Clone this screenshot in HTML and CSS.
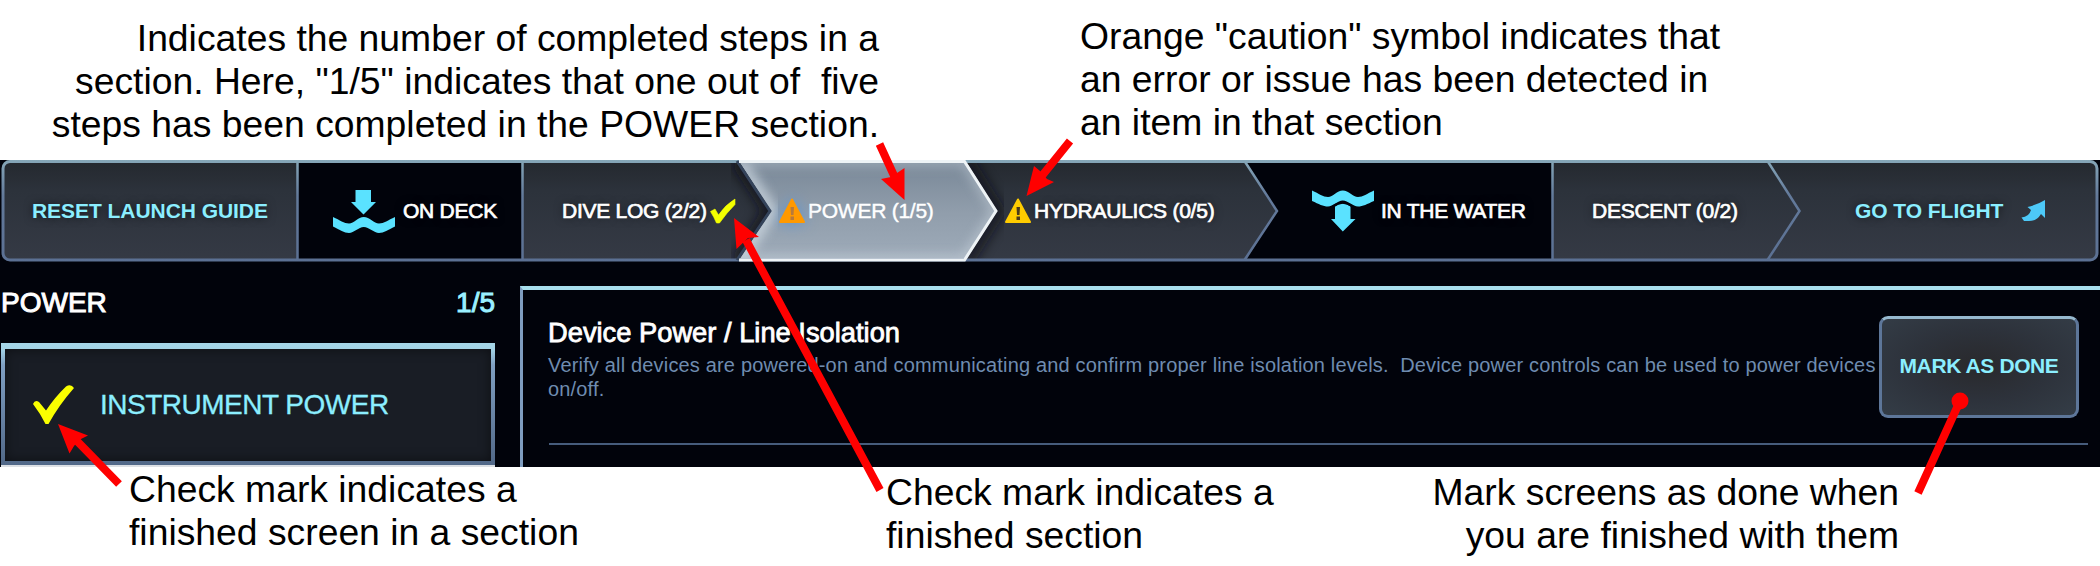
FILE: index.html
```html
<!DOCTYPE html>
<html lang="en">
<head>
<meta charset="utf-8">
<title>Launch guide</title>
<link rel="stylesheet" href="styles.css">
</head>
<body>
<div class="page">
  <div class="notes notes-top">
    <p class="note note-steps">Indicates the number of completed steps in a
section. Here, "1/5" indicates that one out of  five
steps has been completed in the POWER section.</p>
    <p class="note note-caution">Orange "caution" symbol indicates that
an error or issue has been detected in
an item in that section</p>
  </div>

  <div class="app">
    <nav class="steps">
      <svg class="steps-bg" width="2100" height="102" viewBox="0 0 2100 102">
        <defs>
          <linearGradient id="slate" x1="0" y1="0" x2="0" y2="1"><stop offset="0" stop-color="#24282e"/><stop offset=".3" stop-color="#2c323b"/><stop offset="1" stop-color="#353a45"/></linearGradient>
          <linearGradient id="active" x1="0" y1="0" x2="0" y2="1"><stop offset="0" stop-color="#788797"/><stop offset=".5" stop-color="#909dab"/><stop offset="1" stop-color="#9facba"/></linearGradient>
          <linearGradient id="edge" gradientUnits="userSpaceOnUse" x1="0" y1="0" x2="0" y2="102"><stop offset="0" stop-color="#86a7b8"/><stop offset=".35" stop-color="#637a9b"/><stop offset="1" stop-color="#5b7093"/></linearGradient>
          <filter id="soft" x="-20%" y="-20%" width="140%" height="140%"><feGaussianBlur stdDeviation="6"/></filter>
          <clipPath id="bar"><rect x="2" y="0" width="2095" height="101" rx="8"/></clipPath>
          <clipPath id="activeClip"><path d="M738 0H965L997 51 965 101H738L771 51Z"/></clipPath>
          <clipPath id="hydClip"><path d="M965 0H1246L1278 51 1246 101H965L997 51Z"/></clipPath>
          <clipPath id="diveClip"><path d="M523 0H738L771 51 738 101H523Z"/></clipPath>
        </defs>
        <g clip-path="url(#bar)">
          <rect width="2100" height="102" fill="url(#slate)"/>
          <path d="M298 0H523V102H298ZM1245 0H1552V102H1245L1277 51Z" fill="#01030b"/>
          <path d="M738 0H965L997 51 965 102H738L771 51Z" fill="url(#active)"/>
          <g clip-path="url(#activeClip)">
            <path d="M738 0L771 51 738 102" fill="none" stroke="#dce6ee" stroke-width="12" opacity=".7" filter="url(#soft)"/>
            <path d="M745 100H965L997 51 965 1H745" fill="none" stroke="#dbe4ec" stroke-width="8" opacity=".5" filter="url(#soft)"/>
          </g>
          <g clip-path="url(#hydClip)">
            <path d="M965 0L997 51 965 102" fill="none" stroke="#0c0f14" stroke-width="16" opacity=".65" filter="url(#soft)"/>
          </g>
          <g clip-path="url(#diveClip)">
            <path d="M738 0L771 51 738 102" fill="none" stroke="#0c0f14" stroke-width="16" opacity=".7" filter="url(#soft)"/>
          </g>
        </g>
        <g fill="none" stroke="url(#edge)" stroke-width="3">
          <path d="M297.500 2V99M522.500 2V99M1552.500 2V99" stroke-width="2.500"/>
          <path d="M1244.500 1L1277 51 1244.500 100M1767.500 1L1799.500 51 1767.500 100" stroke-width="2.500"/>
          <rect x="3" y="1.500" width="2094" height="98.500" rx="7"/>
        </g>
        <path d="M737 1L770 51 737 100" fill="none" stroke="#34435a" stroke-width="3"/>
        <path d="M739 1.500H964.500L996 51 964.500 100H739" fill="none" stroke="#eef3f6" stroke-width="3"/>
      </svg>
      <div class="step step-reset link">RESET LAUNCH GUIDE</div>
      <div class="step step-deck">
        <svg width="64" height="46" viewBox="332 187 64 46" fill="#5ae2ff"><path d="M355.500 189H371V201H376L363.500 213.500 351 201H355.500ZM333 216C340 219 344 222.500 349 222.500S358 216 363.800 216 374 222.500 379 222.500 388 219 395 216V225.500C388 229 384 232 379 232S369 226 363.800 226 354 232 349 232 340 229 333 225.500Z"/></svg>
        <span>ON DECK</span>
      </div>
      <div class="step step-dive"><span>DIVE LOG (2/2)</span>
        <svg width="26" height="26" viewBox="711 195 26 26"><path d="M711.500 208.500L716 206 719.500 212Q726 202 736 196V201.500Q727.500 210 720.500 220H717.500Q715 214 711.500 208.500Z" fill="#f3ff00" stroke="#f3ff00" stroke-width=".6"/></svg>
      </div>
      <div class="step step-power">
        <svg class="glow" width="28" height="26" viewBox="0 0 28 26"><path d="M14 1.500L26 24H2Z" fill="#ff9900" stroke="#ff9900" stroke-width="2" stroke-linejoin="round"/><path d="M12.500 9H16L15.500 17H13ZM12.500 18.500H16V22H12.500Z" fill="#b7793a"/></svg>
        <span>POWER (1/5)</span>
      </div>
      <div class="step step-hyd">
        <svg width="28" height="26" viewBox="0 0 28 26"><path d="M14 1.500L26 24H2Z" fill="#ffcc00" stroke="#ffcc00" stroke-width="2" stroke-linejoin="round"/><path d="M12.500 9H16L15.500 17H13ZM12.500 18.500H16V22H12.500Z" fill="#4a3a1c"/></svg>
        <span>HYDRAULICS (0/5)</span>
      </div>
      <div class="step step-water">
        <svg width="64" height="46" viewBox="1311 188 64 46" fill="#5ae2ff"><path d="M1312 190.500C1319 193.500 1323 197 1328 197S1337 190.500 1342.800 190.500 1353 197 1358 197 1367 193.500 1374 190.500V201C1367 204 1363 206.500 1358 206.500S1348 200.500 1342.800 200.500 1333 206.500 1328 206.500 1319 204 1312 201ZM1335 206.500Q1342.800 200.500 1350.500 206.500V219H1355.500L1342.800 231.500 1331 219H1335Z"/><path d="M1333 206.500Q1342.800 199 1352.500 206.500" fill="none" stroke="#01030b" stroke-width="2"/></svg>
        <span>IN THE WATER</span>
      </div>
      <div class="step step-descent">DESCENT (0/2)</div>
      <div class="step step-flight link"><span>GO TO FLIGHT</span>
        <svg width="25" height="23" viewBox="2020 199 25 23"><path d="M2044 200V218L2040 214Q2036 221 2028 221H2023L2020.500 217.500Q2028 217 2030 210L2026.500 207Q2036 205 2044 200Z" fill="#4dc9f8"/></svg>
      </div>
    </nav>

    <div class="body">
      <aside class="side">
        <div class="side-head"><span>POWER</span><span class="count">1/5</span></div>
        <div class="task">
          <svg width="44" height="42" viewBox="0 0 44 42"><path d="M1 20Q3 15 7 18L14 26.500Q23 13 34 2.500Q39 -.5 42 4Q27 21 16.500 40H13.500Q8 29 1 20Z" fill="#faff00"/></svg>
          <span>INSTRUMENT POWER</span>
        </div>
      </aside>
      <main class="panel">
        <div class="panel-head">
          <div class="panel-text">
            <h1>Device Power / Line Isolation</h1>
            <p>Verify all devices are powered-on and communicating and confirm proper line isolation levels.  Device power controls can be used to power devices
on/off.</p>
          </div>
          <button class="done">MARK AS DONE</button>
        </div>
      </main>
    </div>
  </div>

  <div class="notes notes-bottom">
    <p class="note note-screen">Check mark indicates a
finished screen in a section</p>
    <p class="note note-section">Check mark indicates a
finished section</p>
    <p class="note note-done">Mark screens as done when
you are finished with them</p>
  </div>

  <svg class="arrows" width="2100" height="566" viewBox="0 0 2100 566">
    <g stroke="#f00" stroke-width="8">
      <path d="M879.500 144L896 180M1070 141L1041 177M880 490L746 240M119 484L76 440M1918 493L1960 401"/>
    </g>
    <g fill="#f00">
      <path d="M904.500 200L881 179 891 177 897 173 904.500 168Z"/>
      <path d="M1026.500 196L1034 166 1040 171 1047 179 1054 182Z"/>
      <path d="M734 218L759 237 748 238 736.500 249Z"/>
      <path d="M58 424L88 435.500 79 440 74 446 69.500 453.500Z"/>
      <circle cx="1960" cy="401" r="8.500"/>
    </g>
  </svg>
</div>
</body>
</html>
```
FILE: styles.css
```css
* { box-sizing: border-box; }
body {
  margin: 0;
  background: #fff;
  font-family: "Liberation Sans", Arial, sans-serif;
}
p, h1 { margin: 0; font-weight: 400; }
svg { flex: none; display: block; }

.page {
  position: relative;
  width: 2100px;
  height: 566px;
  overflow: hidden;
  display: flex;
  flex-direction: column;
}
.arrows { position: absolute; inset: 0; pointer-events: none; }

/* Callout text above and below the window */
.notes { display: flex; align-items: flex-start; }
.note { font-size: 37.3px; line-height: 43px; color: #000; white-space: pre; font-kerning: none; }
.notes-top { height: 160px; }
.note-steps { width: 879px; padding-top: 17px; text-align: right; }
.note-caution { margin-left: 201px; padding-top: 15px; }
.notes-bottom { height: 99px; display: grid; grid-template-columns: 757px 543px 600px; padding-left: 129px; overflow: visible; }
.note-screen { padding-top: 1px; }
.note-section, .note-done { padding-top: 4px; }
.note-done { width: 470px; text-align: right; }

.app { height: 307px; background: #01030b; overflow: hidden; }

/* Step bar */
.steps {
  position: relative;
  height: 102px;
  display: grid;
  grid-template-columns: 298px 225px 216px 227px 280px 306px 216px 332px;
}
.steps-bg { position: absolute; inset: 0; }
.step {
  position: relative;
  display: flex;
  align-items: center;
  padding-bottom: 1px;
  color: #fff;
  font-size: 21px;
  letter-spacing: -0.25px;
  white-space: nowrap;
  -webkit-text-stroke: 0.7px currentColor;
  text-shadow: 0 0 8px rgba(0, 0, 0, .6);
}
.step svg { -webkit-text-stroke: 0; }
.link { color: #8beeff; font-weight: 700; letter-spacing: -0.05px; -webkit-text-stroke: 0; }
.step-reset { padding-left: 32px; }
.step-deck { padding-left: 34px; gap: 7px; }
.step-dive { padding-left: 39px; gap: 3px; }
.step-power { padding-left: 39px; gap: 2px; text-shadow: none; -webkit-text-stroke: 0.4px currentColor; }
.step-hyd { padding-left: 38px; gap: 2px; }
.step-water { padding-left: 65px; gap: 6px; }
.step-descent { padding-left: 40px; }
.step-flight { padding-left: 87px; gap: 18px; }
.glow { filter: drop-shadow(0 0 7px #5c94d0); }

/* Content */
.body { display: grid; grid-template-columns: 520px 1580px; height: 205px; }
.side { padding-left: 1px; }
.side-head {
  display: flex;
  justify-content: space-between;
  width: 494px;
  height: 81px;
  padding-top: 25px;
  font-size: 28px;
  line-height: 32px;
  color: #fff;
  -webkit-text-stroke: 1px currentColor;
}
.count { color: #9af0ff; }
.task {
  width: 494px;
  height: 122px;
  border: 4px solid #6782a8;
  border-image: linear-gradient(#a5d6e8, #7f9fc2 15%, #526989) 1;
  border-width: 6px 4px 4px;
  background: #191d25;
  box-shadow: inset 0 0 12px rgba(0, 0, 0, .5), 0 2px 0 #dce0e5;
  display: flex;
  align-items: center;
  gap: 24px;
  padding: 0 0 0 27px;
  color: #8beeff;
  font-size: 28px;
  letter-spacing: -0.5px;
  -webkit-text-stroke: 0.3px currentColor;
}
.panel {
  margin-top: 24px;
  border-top: 4px solid #a8dfee;
  border-left: 3px solid #7f9dc0;
  padding-left: 26px;
}
.panel-head {
  width: 1539px;
  height: 155px;
  border-bottom: 2px solid #465c7c;
  display: flex;
  padding-top: 26px;
}
.panel-text { width: 1330px; padding-top: 1px; margin-left: -1px; margin-right: 1px; }
h1 { font-size: 27.3px; line-height: 32px; color: #fff; -webkit-text-stroke: 0.8px currentColor; }
.panel-text p {
  white-space: pre;
  margin-top: 4px;
  font-size: 20px;
  letter-spacing: 0.17px;
  line-height: 24px;
  color: #6f8cb0;
}
.done {
  width: 200px;
  height: 102px;
  padding: 0 0 3px;
  border: 3px solid #5d7699;
  border-top-color: #96b9cf;
  border-radius: 9px;
  background: radial-gradient(ellipse at 50% 48%, #29292c, #2d323b 50%, #343d47);
  color: #8beeff;
  font: 700 21px "Liberation Sans", Arial, sans-serif;
  letter-spacing: -0.4px;
  white-space: nowrap;
}
```
